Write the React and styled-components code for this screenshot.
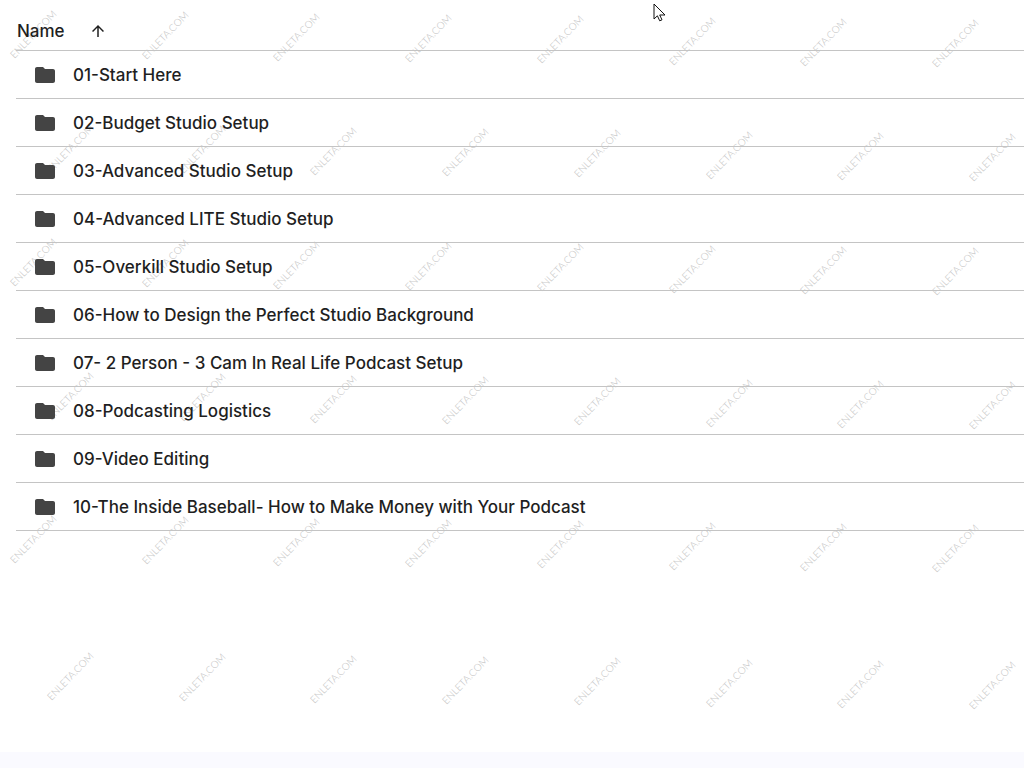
import React from "react";
import styled, { createGlobalStyle } from "styled-components";

const ColorText = "#1f1f1f";
const ColorIcon = "#444444";
const ColorLine = "#c4c4c4";
const ColorMark = "#bebebe";
const ColorFooter = "#fafaff";

const GlobalStyle = createGlobalStyle`
  * {
    box-sizing: border-box;
  }
  body {
    margin: 0;
    background: white;
    color: ${ColorText};
    font-family: Inter, Roboto, sans-serif;
  }
`;

const Page = styled.div`
  position: relative;
  display: flex;
  flex-direction: column;
  min-height: 100vh;
  overflow: hidden;
`;

const Main = styled.main`
  position: relative;
  flex: 1;
  padding-left: 16px;
`;

const Footer = styled.footer`
  height: 16px;
  background: ${ColorFooter};
`;

const Table = styled.table`
  width: 100%;
  border-collapse: separate;
  border-spacing: 0;
`;

const HeadCell = styled.th`
  height: 51px;
  padding: 12px 0 0 1px;
  border-bottom: 1px solid ${ColorLine};
  text-align: left;
`;

const SortButton = styled.button`
  display: flex;
  align-items: center;
  gap: 24px;
  padding: 0;
  border: none;
  background: none;
  color: inherit;
  font-family: inherit;
  font-size: 17px;
  font-weight: 450;
  line-height: 24px;
  cursor: pointer;
`;

const Cell = styled.td`
  height: 48px;
  padding: 0 17px;
  border-bottom: 1px solid ${ColorLine};
`;

const FolderLink = styled.a`
  display: flex;
  align-items: center;
  gap: 16px;
  color: inherit;
  font-size: 17px;
  font-weight: 450;
  line-height: 24px;
  text-decoration: none;
`;

const Icon = styled.svg`
  flex: none;
  width: ${({ $size }) => $size}px;
  height: ${({ $size }) => $size}px;
  fill: ${({ $color }) => $color || ColorIcon};
`;

const Marks = styled.div`
  position: absolute;
  inset: 0;
  pointer-events: none;
`;

const Mark = styled.span`
  position: absolute;
  color: ${ColorMark};
  font-family: Lato, sans-serif;
  font-size: 10px;
  font-weight: 300;
  line-height: 12px;
  white-space: nowrap;
  transform: translate(-50%, -50%) rotate(-46deg);
`;

const Cursor = styled.svg`
  position: absolute;
  top: 3px;
  left: 653px;
  width: 13px;
  height: 20px;
`;

const folders = [
  "01-Start Here",
  "02-Budget Studio Setup",
  "03-Advanced Studio Setup",
  "04-Advanced LITE Studio Setup",
  "05-Overkill Studio Setup",
  "06-How to Design the Perfect Studio Background",
  "07- 2 Person - 3 Cam In Real Life Podcast Setup",
  "08-Podcasting Logistics",
  "09-Video Editing",
  "10-The Inside Baseball- How to Make Money with Your Podcast",
];

// every other line of marks is shifted to the right
const markLines = [
  { x: 33, y: 34 },
  { x: 70, y: 148 },
  { x: 33, y: 262 },
  { x: 70, y: 396 },
  { x: 33, y: 539 },
  { x: 70, y: 676 },
];
const marks = markLines.flatMap(({ x, y }) =>
  Array.from({ length: 8 }, (_, i) => ({
    left: Math.round(x + i * 131.7),
    top: Math.round(y + i * 1.3),
  }))
);

const App = () => (
  <>
    <GlobalStyle />
    <Page>
      <Marks aria-hidden="true">
        {marks.map((place) => (
          <Mark key={`${place.left}-${place.top}`} style={place}>
            ENLETA.COM
          </Mark>
        ))}
      </Marks>
      <Main>
        <Table>
          <thead>
            <tr>
              <HeadCell scope="col" aria-sort="ascending">
                <SortButton type="button">
                  Name
                  <Icon viewBox="0 0 24 24" $size={18} $color={ColorText} aria-hidden="true">
                    <path d="M4 12l1.41 1.41L11 7.83V20h2V7.83l5.58 5.59L20 12l-8-8-8 8z" />
                  </Icon>
                </SortButton>
              </HeadCell>
            </tr>
          </thead>
          <tbody>
            {folders.map((name) => (
              <tr key={name}>
                <Cell>
                  <FolderLink href="#">
                    <Icon viewBox="0 0 24 24" $size={24} aria-hidden="true">
                      <path d="M10 4H4c-1.1 0-1.99.9-1.99 2L2 18c0 1.1.9 2 2 2h16c1.1 0 2-.9 2-2V8c0-1.1-.9-2-2-2h-8l-2-2z" />
                    </Icon>
                    {name}
                  </FolderLink>
                </Cell>
              </tr>
            ))}
          </tbody>
        </Table>
      </Main>
      <Footer />
      <Cursor viewBox="0 0 13 20" aria-hidden="true">
        <path
          d="M1 1v15l3.4-3.2 2.3 5 2.3-1-2.3-4.8H12z"
          fill="white"
          stroke="#111"
          strokeWidth="1"
        />
      </Cursor>
    </Page>
  </>
);

export default App;
